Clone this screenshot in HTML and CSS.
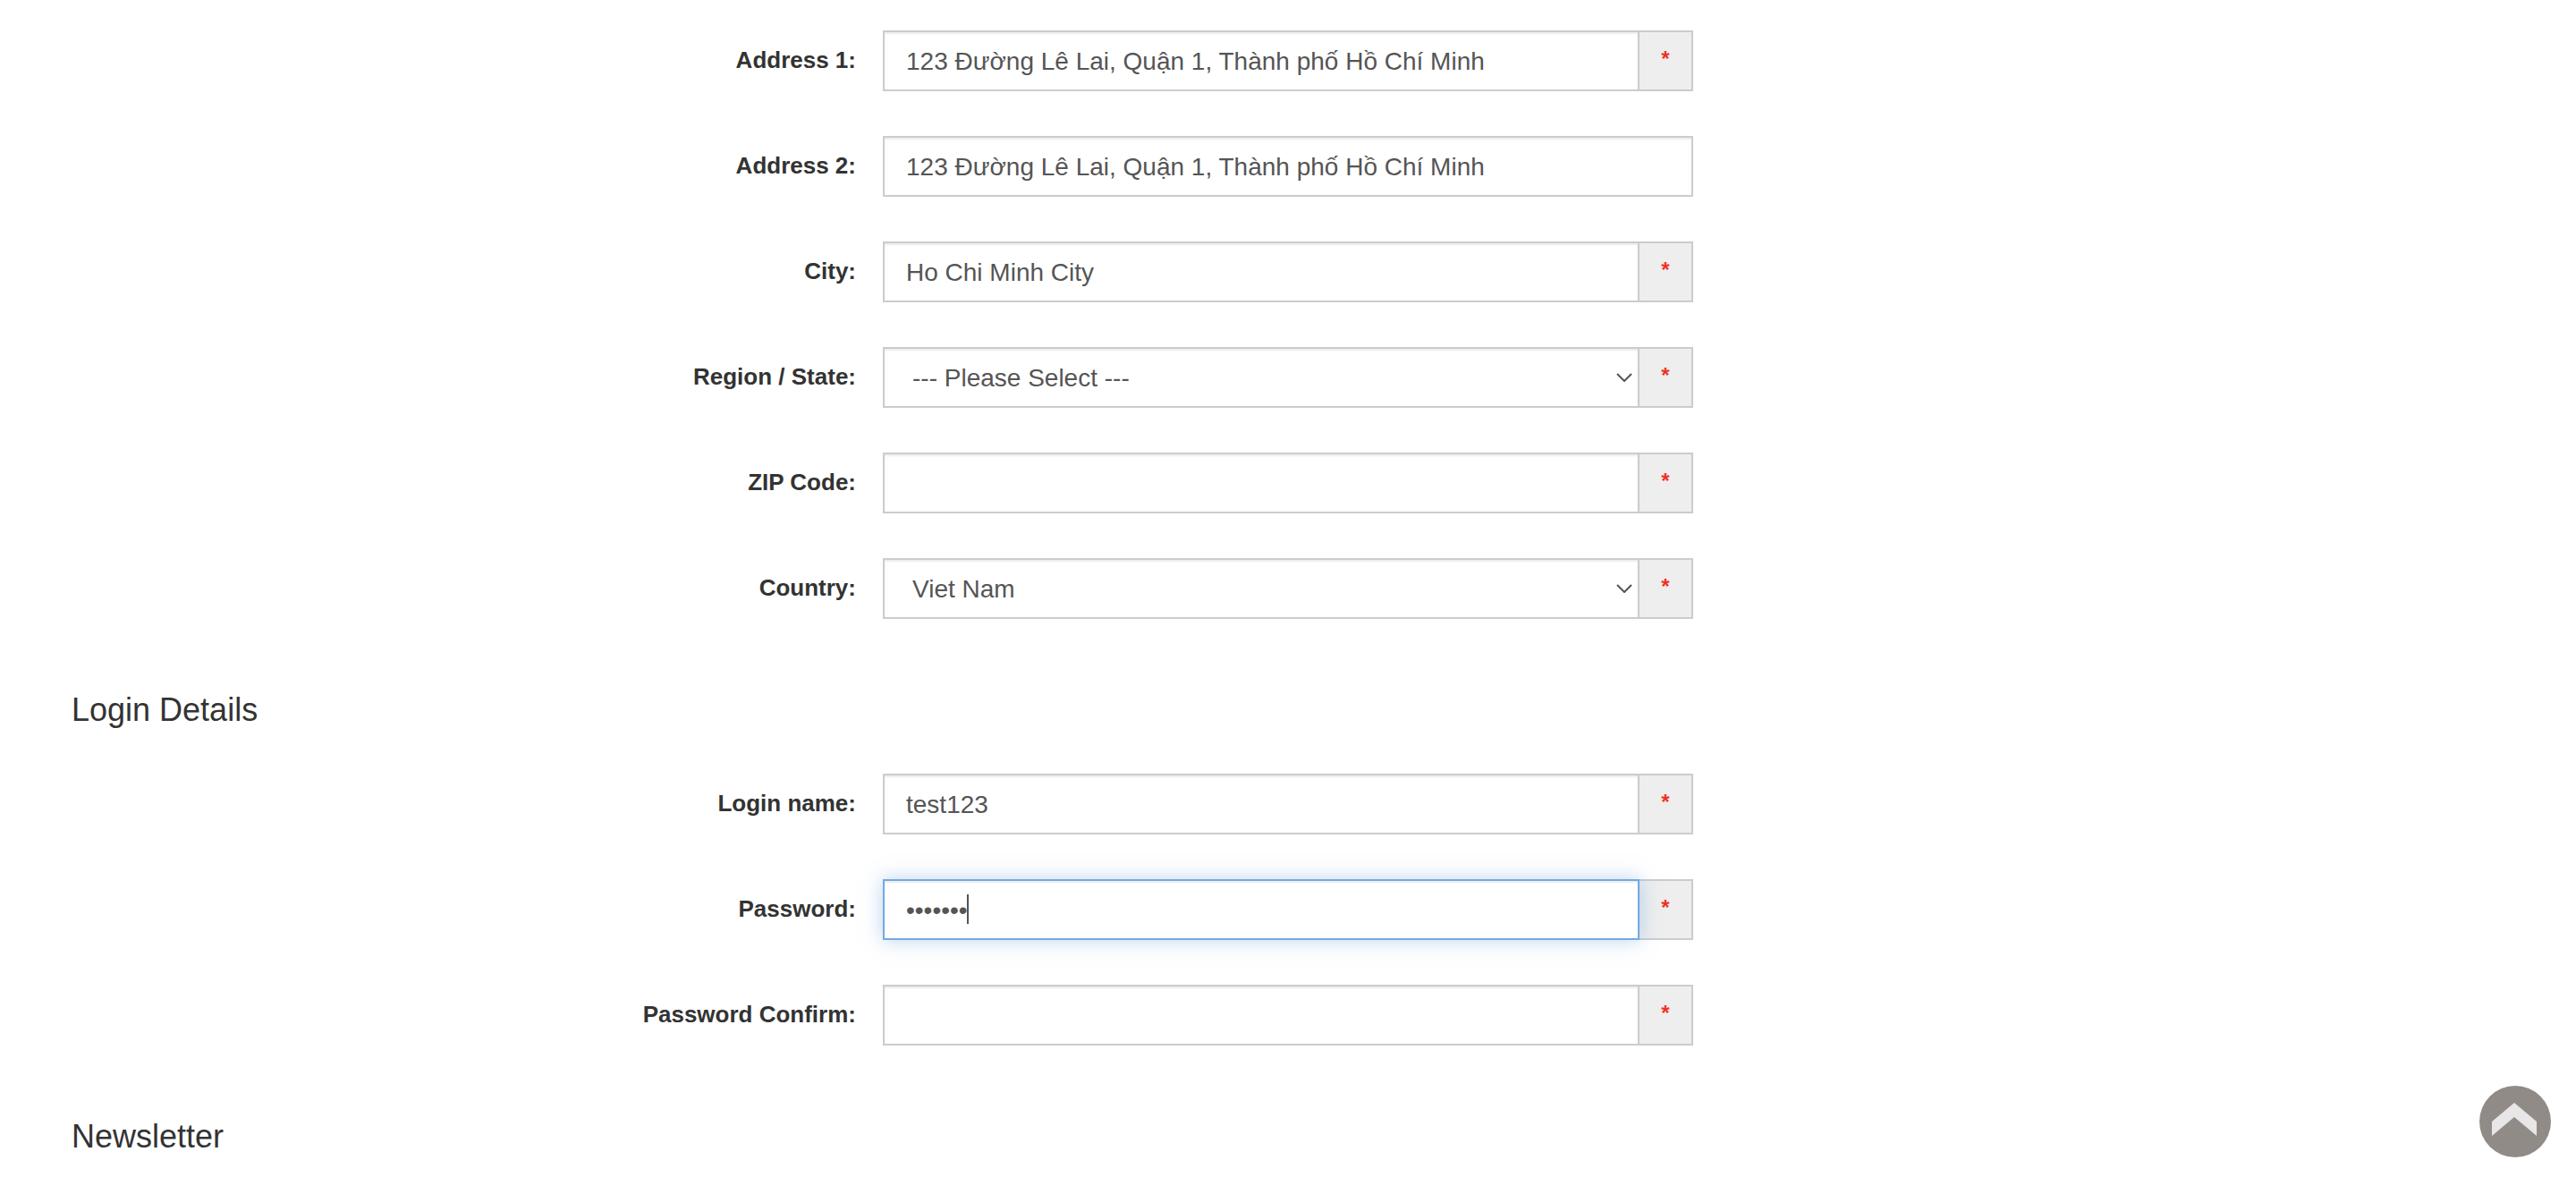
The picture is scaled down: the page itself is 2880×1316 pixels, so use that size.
FILE: index.html
```html
<!DOCTYPE html>
<html lang="en">
<head>
<meta charset="utf-8">
<title>Create Account</title>
<link rel="stylesheet" href="styles.css">
</head>
<body>
<form class="account-form">
  <section class="fields" aria-label="Your Address">
    <div class="row">
      <label for="address1">Address 1:</label>
      <div class="input-group">
        <input class="control" id="address1" type="text" value="123 Đường Lê Lai, Quận 1, Thành phố Hồ Chí Minh">
        <span class="required">*</span>
      </div>
    </div>
    <div class="row">
      <label for="address2">Address 2:</label>
      <div class="input-group">
        <input class="control" id="address2" type="text" value="123 Đường Lê Lai, Quận 1, Thành phố Hồ Chí Minh">
      </div>
    </div>
    <div class="row">
      <label for="city">City:</label>
      <div class="input-group">
        <input class="control" id="city" type="text" value="Ho Chi Minh City">
        <span class="required">*</span>
      </div>
    </div>
    <div class="row">
      <label for="region">Region / State:</label>
      <div class="input-group">
        <div class="select-box">
          <select class="control" id="region"><option>--- Please Select ---</option></select>
          <svg class="chevron" viewBox="0 0 18 10" aria-hidden="true"><path d="M1 1l8 8 8-8"/></svg>
        </div>
        <span class="required">*</span>
      </div>
    </div>
    <div class="row">
      <label for="zip">ZIP Code:</label>
      <div class="input-group">
        <input class="control" id="zip" type="text">
        <span class="required">*</span>
      </div>
    </div>
    <div class="row">
      <label for="country">Country:</label>
      <div class="input-group">
        <div class="select-box">
          <select class="control" id="country"><option>Viet Nam</option></select>
          <svg class="chevron" viewBox="0 0 18 10" aria-hidden="true"><path d="M1 1l8 8 8-8"/></svg>
        </div>
        <span class="required">*</span>
      </div>
    </div>
  </section>

  <h4>Login Details</h4>
  <section class="fields" aria-label="Login Details">
    <div class="row">
      <label for="loginname">Login name:</label>
      <div class="input-group">
        <input class="control" id="loginname" type="text" value="test123">
        <span class="required">*</span>
      </div>
    </div>
    <div class="row">
      <label for="password">Password:</label>
      <div class="input-group">
        <input class="control" id="password" type="password" value="test123">
        <span class="caret" aria-hidden="true"></span>
        <span class="required">*</span>
      </div>
    </div>
    <div class="row">
      <label for="confirm">Password Confirm:</label>
      <div class="input-group">
        <input class="control" id="confirm" type="password">
        <span class="required">*</span>
      </div>
    </div>
  </section>

  <h4>Newsletter</h4>
</form>

<a class="to-top" href="#" aria-label="Back to top">
  <svg viewBox="0 0 80 80" aria-hidden="true">
    <circle cx="40" cy="40" r="40" fill="#918b88"/>
    <path d="M14 40L39 19L64 40V56L39 35L14 56Z" fill="#e8e6e7"/>
  </svg>
</a>
<script src="script.js"></script>
</body>
</html>
```
FILE: styles.css
```css
* {
  box-sizing: border-box;
}

body {
  margin: 0;
  background: #fff;
  color: #333;
  font-family: "Liberation Sans", Arial, sans-serif;
  font-size: 28px;
}

.account-form {
  padding: 34px 81px 0;
}

.fields {
  display: flex;
  flex-direction: column;
  gap: 50px;
}

.row {
  display: grid;
  grid-template-columns: repeat(3, 1fr);
  align-items: center;
}

label {
  padding: 0 30px 2px 0;
  font-size: 26px;
  font-weight: 700;
  line-height: 36px;
  text-align: right;
}

h4 {
  margin: 82px 0 51px -1px;
  font-size: 36px;
  font-weight: 400;
  line-height: 40px;
}

.input-group {
  position: relative;
  display: flex;
}

.control {
  flex: 1;
  width: 100%;
  min-width: 0;
  height: 68px;
  margin: 0;
  padding: 1px 24px 0;
  border: 2px solid #ccc;
  border-radius: 0;
  outline: 0;
  background: #fff;
  box-shadow: inset 0 2px 2px rgba(0, 0, 0, 0.075);
  color: #555;
  font: inherit;
  caret-color: transparent;
}

.control:focus {
  position: relative;
  z-index: 1;
  border-color: #74aae0;
  box-shadow: inset 0 2px 2px rgba(0, 0, 0, 0.075), 0 0 20px rgba(116, 170, 224, 0.5);
}

/* Steady insertion point after the masked password */
.caret {
  position: absolute;
  top: 17px;
  left: 94px;
  z-index: 2;
  width: 2px;
  height: 33px;
  background: #555;
}

.select-box {
  position: relative;
  flex: 1;
  min-width: 0;
}

select.control {
  display: block;
  padding: 1px 31px 0;
  appearance: none;
}

.chevron {
  position: absolute;
  top: 29px;
  right: 8px;
  width: 18px;
  height: 10px;
  fill: none;
  stroke: #555;
  stroke-width: 2;
  pointer-events: none;
}

.required {
  width: 60px;
  padding-top: 14px;
  border: 2px solid #ccc;
  border-left: 0;
  background: #eee;
  color: #ee3224;
  font-size: 24px;
  font-weight: 700;
  line-height: 32px;
  text-align: center;
}

.to-top {
  position: fixed;
  right: 28px;
  bottom: 22px;
  width: 80px;
  height: 80px;
}

.to-top svg {
  display: block;
}
```
FILE: script.js
```js
const password = document.getElementById("password");
password.focus({ preventScroll: true });
```
